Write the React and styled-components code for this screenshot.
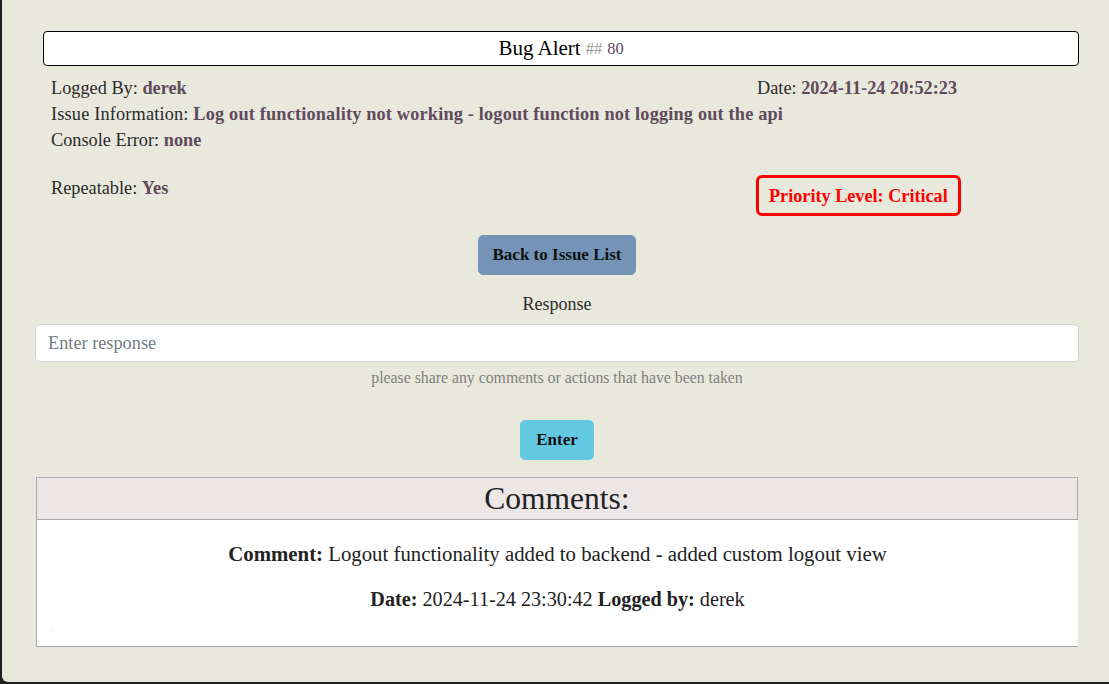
import React from "react";
import styled, { createGlobalStyle } from "styled-components";

const GlobalStyle = createGlobalStyle`
  body {
    margin: 0;
    background: #1f2024;
    font-family: "Liberation Serif", "DejaVu Serif", serif;
    color: #2b2b2b;
  }
`;

const Card = styled.div`
  margin-left: 2px;
  height: 682px;
  box-sizing: border-box;
  background: #e8e8dc;
  border-bottom-left-radius: 6px;
  padding: 31px 30px 0 33px;
`;

const TitleBox = styled.div`
  margin-left: 8px;
  height: 35px;
  box-sizing: border-box;
  background: #fff;
  border: 1px solid #000;
  border-radius: 4px;
  display: flex;
  align-items: center;
  justify-content: center;
  font-size: 21px;
  color: #000;
`;

const TicketNo = styled.span`
  margin-left: 5px;
  font-size: 16.5px;
  color: #5f4b5b;
  span {
    color: #9a9a9a;
    margin-right: 5px;
  }
`;

const Details = styled.div`
  padding: 9px 0 0 16px;
  display: grid;
  grid-template-columns: 706px 1fr;
  font-size: 18.3px;
  line-height: 26px;
`;

const Line = styled.div`
  grid-column: ${(p) => p.$col || "auto"};
  white-space: nowrap;
  letter-spacing: ${(p) => p.$ls || 0}px;
`;

const Value = styled.b`
  color: #5f4b5b;
`;

const LowerRow = styled.div`
  grid-column: 1 / -1;
  display: grid;
  grid-template-columns: 705px auto 1fr;
  margin-top: 22px;
  align-items: start;
`;

const Priority = styled.div`
  border: 3px solid #ff0000;
  border-radius: 6px;
  height: 41px;
  box-sizing: border-box;
  padding: 0 10px;
  display: flex;
  align-items: center;
  color: #ff0000;
  font-weight: bold;
  font-size: 18.2px;
`;

const Center = styled.div`
  display: flex;
  flex-direction: column;
  align-items: center;
  margin-top: ${(p) => p.$mt || 0}px;
`;

const Button = styled.button`
  background: ${(p) => p.$bg};
  border: 1px solid ${(p) => p.$bg};
  border-radius: 5px;
  height: 40px;
  padding: 0 ${(p) => p.$px || 14}px;
  font-family: inherit;
  font-weight: bold;
  font-size: 17px;
  color: #111;
  cursor: pointer;
`;

const Label = styled.div`
  margin-top: 17px;
  font-size: 18px;
  line-height: 24px;
`;

const Input = styled.input`
  display: block;
  width: 100%;
  box-sizing: border-box;
  margin-top: 8px;
  height: 38px;
  padding: 0 12px;
  border: 1px solid #ced4da;
  border-radius: 5px;
  font-family: inherit;
  font-size: 18.3px;
  background: #fff;
  &::placeholder {
    color: #737b83;
  }
`;

const Help = styled.div`
  margin-top: 5px;
  font-size: 15.8px;
  color: #808080;
  line-height: 22px;
`;

const Comments = styled.div`
  margin: 17px 1px 0 1px;
  background: #fff;
  border: 1px solid #a9a6a9;
  border-top-color: #b3b0b3;
  border-right: none;
  height: 170px;
  box-sizing: border-box;
`;

const CommentsHead = styled.div`
  height: 42px;
  box-sizing: border-box;
  background: #ece6e6;
  border-bottom: 1px solid #aaa7aa;
  border-right: 1px solid #aaa7aa;
  display: flex;
  align-items: center;
  justify-content: center;
  font-size: 31.5px;
  color: #222;
`;

const CommentText = styled.p`
  margin: ${(p) => p.$mt}px 0 0;
  text-align: center;
  font-size: ${(p) => p.$fs}px;
  line-height: 26px;
  color: #222;
`;

const Dot = styled.div`
  margin: 18px 0 0 15px;
  width: 1px;
  height: 1px;
  background: #bbb;
`;

export default function App() {
  return (
    <>
      <GlobalStyle />
      <Card>
        <TitleBox>
          Bug Alert
          <TicketNo>
            <span>##</span>80
          </TicketNo>
        </TitleBox>
        <Details>
          <Line>
            Logged By: <Value>derek</Value>
          </Line>
          <Line>
            Date: <Value>2024-11-24 20:52:23</Value>
          </Line>
          <Line $col="1 / -1" $ls={0.17}>
            Issue Information:{" "}
            <Value>
              Log out functionality not working - logout function not logging
              out the api
            </Value>
          </Line>
          <Line $col="1 / -1">
            Console Error: <Value>none</Value>
          </Line>
          <LowerRow>
            <Line>
              Repeatable: <Value>Yes</Value>
            </Line>
            <Priority>Priority Level: Critical</Priority>
          </LowerRow>
        </Details>
        <Center $mt={19}>
          <Button $bg="#7393b7">Back to Issue List</Button>
          <Label>Response</Label>
        </Center>
        <Input placeholder="Enter response" />
        <Center>
          <Help>please share any comments or actions that have been taken</Help>
        </Center>
        <Center $mt={31}>
          <Button $bg="#63c9e3" $px={15}>
            Enter
          </Button>
        </Center>
        <Comments>
          <CommentsHead>Comments:</CommentsHead>
          <CommentText $mt={21} $fs={20.8}>
            <b>Comment:</b> Logout functionality added to backend - added custom
            logout view
          </CommentText>
          <CommentText $mt={19} $fs={20.2}>
            <b>Date:</b> 2024-11-24 23:30:42 <b>Logged by:</b> derek
          </CommentText>
          <Dot />
        </Comments>
      </Card>
    </>
  );
}
